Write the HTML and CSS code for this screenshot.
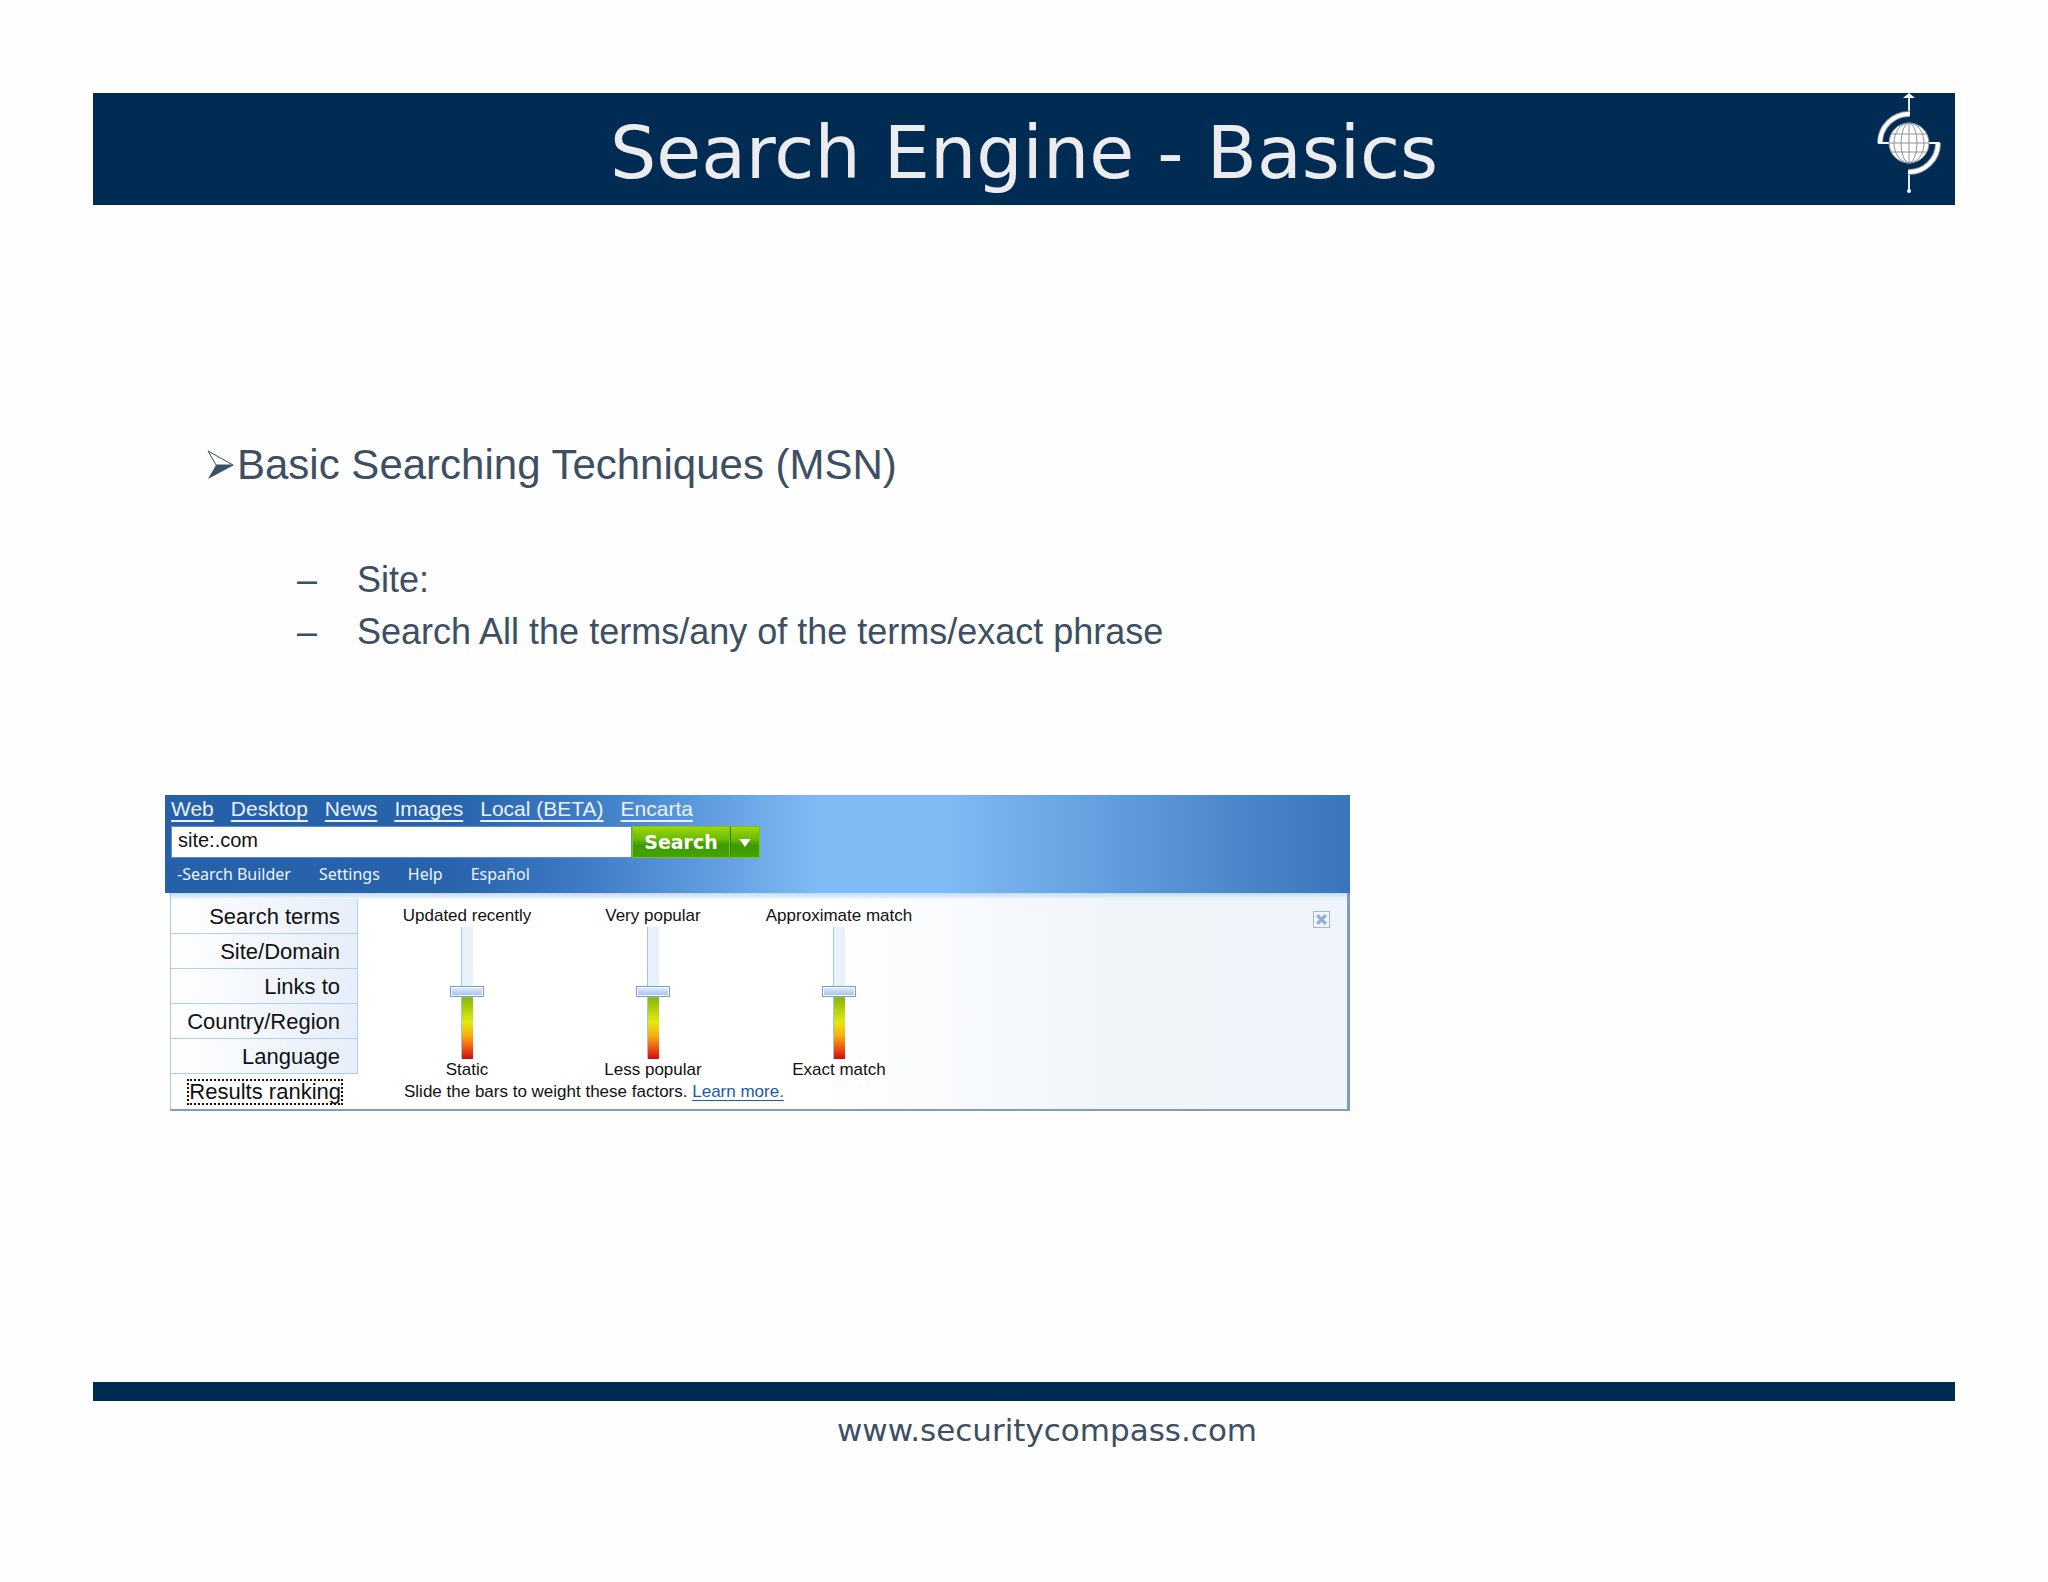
FILE: index.html
```html
<!DOCTYPE html>
<html lang="en">
<head>
    <meta charset="UTF-8">
    <meta name="viewport" content="width=device-width, initial-scale=1.0">
    <title>Search Engine - Basics</title>
    <link rel="stylesheet" href="styles.css">
</head>
<body>
    <header class="title-bar">
        <h1>Search Engine - Basics</h1>
        <svg class="logo" viewBox="0 0 64 102" aria-hidden="true">
            <path d="M32 4V23M32 79V96" stroke="#e4e7ea" stroke-width="2"/>
            <path d="M26 5L32 0L38 5Z" fill="#fff"/>
            <circle cx="32" cy="98" r="2" fill="#fff"/>
            <path d="M3 50A29 29 0 0 1 33 21" fill="none" stroke="#8f98a3" stroke-width="6"/>
            <path d="M61 50A29 29 0 0 1 31 79" fill="none" stroke="#8f98a3" stroke-width="6"/>
            <path d="M3 50A29 29 0 0 1 33 21" fill="none" stroke="#fff" stroke-width="4"/>
            <path d="M61 50A29 29 0 0 1 31 79" fill="none" stroke="#fff" stroke-width="4"/>
            <path d="M1 50H63" stroke="#fff" stroke-width="2"/>
            <circle cx="32" cy="50" r="20" fill="#fff"/>
            <g fill="none" stroke="#8c939b" stroke-width="1">
                <circle cx="32" cy="50" r="20"/>
                <ellipse cx="32" cy="50" rx="8" ry="20"/>
                <ellipse cx="32" cy="50" rx="15" ry="20"/>
                <path d="M32 30V70M12 50H52M14 41H50M14 59H50"/>
            </g>
        </svg>
    </header>

    <main class="content">
        <h2>
            <svg class="arrow" viewBox="0 0 28 30" aria-hidden="true">
                <path d="M1 1L26 15H9Z" fill="#fff" stroke="#3d4f63" stroke-width="1"/>
                <path d="M9 15H27L1 29Z" fill="#3d4f63"/>
            </svg>Basic Searching Techniques (MSN)
        </h2>
        <ul class="points">
            <li>Site:</li>
            <li>Search All the terms/any of the terms/exact phrase</li>
        </ul>

        <section class="msn">
            <div class="msn-top">
                <nav class="tabs">
                    <a href="#">Web</a>
                    <a href="#">Desktop</a>
                    <a href="#">News</a>
                    <a href="#">Images</a>
                    <a href="#">Local (BETA)</a>
                    <a href="#">Encarta</a>
                </nav>
                <form class="search">
                    <input type="text" value="site:.com" aria-label="Search the web">
                    <button type="button" class="go">Search</button>
                    <button type="button" class="more" aria-label="More searches">
                        <svg viewBox="0 0 10 7" aria-hidden="true"><path d="M0 0H10L5 7Z" fill="#fff"/></svg>
                    </button>
                </form>
                <nav class="tools">
                    <a href="#">-Search Builder</a>
                    <a href="#">Settings</a>
                    <a href="#">Help</a>
                    <a href="#">Español</a>
                </nav>
            </div>
            <div class="builder">
                <div class="side">
                    <button type="button">Search terms</button>
                    <button type="button">Site/Domain</button>
                    <button type="button">Links to</button>
                    <button type="button">Country/Region</button>
                    <button type="button">Language</button>
                    <button type="button" class="active"><span>Results ranking</span></button>
                </div>
                <div class="ranking">
                    <div class="sliders">
                        <div class="slider">
                            <label for="recent">Updated recently</label>
                            <input type="range" id="recent" min="0" max="100" value="51">
                            <span>Static</span>
                        </div>
                        <div class="slider">
                            <label for="popular">Very popular</label>
                            <input type="range" id="popular" min="0" max="100" value="51">
                            <span>Less popular</span>
                        </div>
                        <div class="slider">
                            <label for="match">Approximate match</label>
                            <input type="range" id="match" min="0" max="100" value="51">
                            <span>Exact match</span>
                        </div>
                    </div>
                    <p>Slide the bars to weight these factors. <a href="#">Learn more.</a></p>
                </div>
                <button type="button" class="close" aria-label="Close">
                    <svg viewBox="0 0 12 12" aria-hidden="true"><path d="M2 2L10 10M10 2L2 10" stroke="#8fadd8" stroke-width="3"/></svg>
                </button>
            </div>
        </section>
    </main>

    <footer>
        <p>www.securitycompass.com</p>
    </footer>
</body>
</html>
```

FILE: styles.css
```css
* {
    box-sizing: border-box;
}

body {
    margin: 0;
    padding: 93px 93px 0;
    min-height: 100vh;
    background-color: #fefefe;
    color: #3d4f63;
    font-family: "Liberation Sans", Arial, sans-serif;
}

h1, h2, p, ul {
    margin: 0;
    padding: 0;
    font-weight: normal;
}

/* title */
.title-bar {
    display: grid;
    grid-template-columns: 1fr auto 1fr;
    height: 112px;
    padding-right: 14px;
    background-color: #002c54;
}

.title-bar h1 {
    grid-column: 2;
    padding-left: 14px;
    font-family: "DejaVu Sans", Verdana, sans-serif;
    font-size: 73px;
    line-height: 120px;
    color: #ececee;
}

.logo {
    justify-self: end;
    width: 64px;
    height: 102px;
}

/* bullets */
.content {
    padding: 236px 72px 271px;
}

h2 {
    display: flex;
    align-items: center;
    padding-left: 42px;
    font-size: 42px;
    line-height: 48px;
}

.arrow {
    width: 28px;
    height: 30px;
    margin-right: 2px;
}

.points {
    padding: 65px 0 0 132px;
    list-style: none;
    font-size: 36px;
    line-height: 52px;
}

.points li::before {
    content: "–";
    display: inline-block;
    width: 60px;
}

/* msn search box */
.msn {
    width: 69%;
    margin-top: 137px;
    font-family: "Liberation Sans", Arial, sans-serif;
    color: #111;
}

.msn button {
    border: 0;
    padding: 0;
    font-family: inherit;
}

.msn-top {
    height: 98px;
    padding-left: 6px;
    background: linear-gradient(to right, #2560a8 0%, #2863ab 24%, #3f7dc6 36%, #7fbaf5 55%, #7fbaf5 66%, #5994d6 84%, #3a74ba 100%);
}

.tabs {
    display: flex;
    gap: 17px;
    height: 31px;
    font-size: 21px;
    line-height: 28px;
}

.tabs a {
    color: #e9f3ff;
    text-underline-offset: 4px;
}

.search {
    display: flex;
    height: 32px;
}

.search input {
    width: 461px;
    padding: 0 6px 4px;
    border: 1px solid #5b8fcf;
    background-color: #fff;
    font-family: inherit;
    font-size: 20px;
    color: #111;
}

.search button {
    background: linear-gradient(#9ad80c, #6cbb04 40%, #3d9a02 60%, #43a302);
    border: 1px solid #7cc410;
}

.search .go {
    width: 98px;
    font-family: "DejaVu Sans", Verdana, sans-serif;
    font-size: 19px;
    font-weight: bold;
    color: #fff;
}

.search .more {
    width: 30px;
    border-left: 1px solid #2f7d05;
}

.more svg {
    width: 12px;
    height: 8px;
}

.tools {
    display: flex;
    gap: 28px;
    padding-left: 6px;
    font-family: "Noto Sans", Tahoma, sans-serif;
    font-size: 16px;
    line-height: 32px;
}

.tools a {
    color: #eef5ff;
    text-decoration: none;
}

.builder {
    display: flex;
    margin-left: 5px;
    padding-top: 6px;
    border: 1px solid #a9c9ea;
    border-top: 0;
    border-right: 3px solid #7d9cc3;
    border-bottom: 2px solid #7f9dbf;
    background: linear-gradient(#c3dcf5, #e6f1fc 5px, transparent 6px), linear-gradient(to right, #fff 55%, #f0f5fa 80%, #f0f5fb);
}

.side {
    display: flex;
    flex-direction: column;
    width: 187px;
}

.side button {
    height: 35px;
    padding: 2px 17px 0 0;
    border-right: 1px solid #b0d0ee;
    border-bottom: 1px solid #b0d0ee;
    background: linear-gradient(to right, #fff, #e6eef9);
    font-size: 22px;
    text-align: right;
    color: #111;
}

.side .active {
    padding-top: 0;
    border: 0;
    background: none;
}

.active span {
    display: inline-block;
    line-height: 22px;
    outline: 2px dotted #111;
}

.ranking {
    padding: 6px 0 0 16px;
    font-size: 17px;
    line-height: 22px;
}

.sliders {
    display: flex;
}

.slider {
    display: flex;
    flex-direction: column;
    align-items: center;
    width: 186px;
}

.slider input {
    appearance: none;
    writing-mode: vertical-lr;
    direction: rtl;
    width: 34px;
    height: 132px;
    margin: 0;
    background:
        linear-gradient(#9cc4ec, #9cc4ec) 11px 0 / 1px 100% no-repeat,
        linear-gradient(#e8f0fa 50%, #8ab808 54%, #e0ea10 72%, #f8b010 82%, #e84a10 93%, #c81010) 12px 0 / 11px 100% no-repeat;
}

.slider input::-webkit-slider-thumb {
    appearance: none;
    width: 34px;
    height: 11px;
    border: 1px solid #6d9fdc;
    background: linear-gradient(#e6eefa, #a3bfe6);
    box-shadow: inset 0 0 0 1px #fff;
}

.ranking p {
    padding-left: 30px;
}

.ranking a {
    color: #1c5aa8;
    text-underline-offset: 3px;
}

.close {
    width: 17px;
    height: 17px;
    margin: 12px 17px 0 auto;
    background-color: #f3f7fc;
    outline: 1px solid #9db9df;
    outline-offset: -1px;
    line-height: 0;
}

.close svg {
    width: 13px;
    height: 13px;
}

/* footer */
footer {
    border-top: 19px solid #002c54;
    padding: 10px 0 40px 46px;
    font-family: "DejaVu Sans", Verdana, sans-serif;
    font-size: 31px;
    line-height: 38px;
    text-align: center;
}
```
